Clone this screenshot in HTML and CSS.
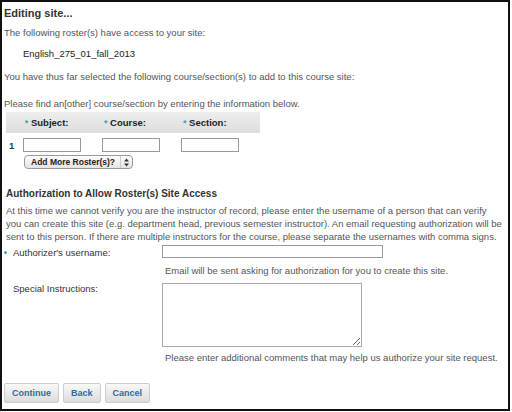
FILE: index.html
```html
<!DOCTYPE html>
<html>
<head>
<meta charset="utf-8">
<link rel="stylesheet" href="styles.css">
</head>
<body>
<div class="frame">
  <h1 class="title">Editing site...</h1>
  <p class="txt">The following roster(s) have access to your site:</p>
  <p class="roster">English_275_01_fall_2013</p>
  <p class="txt sel">You have thus far selected the following course/section(s) to add to this course site:</p>
  <p class="txt find">Please find an[other] course/section by entering the information below.</p>
  <div class="table">
    <div class="thead">
      <span class="num"></span>
      <span class="th"><span class="star">*</span> Subject:</span>
      <span class="th"><span class="star">*</span> Course:</span>
      <span class="th"><span class="star">*</span> Section:</span>
    </div>
    <div class="trow">
      <span class="num">1</span>
      <span class="td"><input class="inp" type="text"></span>
      <span class="td"><input class="inp" type="text"></span>
      <span class="td"><input class="inp" type="text"></span>
    </div>
    <div class="addrow">
      <span class="selbtn">Add More Roster(s)? <span class="arrows"><svg width="7" height="9" viewBox="0 0 7 9"><path d="M3.5 0.5 L6 3.5 H1 Z M3.5 8.5 L6 5.5 H1 Z" fill="#333"/></svg></span></span>
    </div>
  </div>
  <h2 class="sub">Authorization to Allow Roster(s) Site Access</h2>
  <p class="para">At this time we cannot verify you are the instructor of record, please enter the username of a person that can verify<br>you can create this site (e.g. department head, previous semester instructor). An email requesting authorization will be<br>sent to this person. If there are multiple instructors for the course, please separate the usernames with comma signs.</p>
  <div class="form">
    <label class="lbl req"><span class="dot"></span>Authorizer's username:</label>
    <div class="val">
      <input class="wide" type="text">
      <p class="note">Email will be sent asking for authorization for you to create this site.</p>
    </div>
    <label class="lbl spec">Special Instructions:</label>
    <div class="val val2">
      <textarea class="area"></textarea>
      <p class="note note2">Please enter additional comments that may help us authorize your site request.</p>
    </div>
  </div>
  <div class="actions">
    <button class="btn">Continue</button>
    <button class="btn">Back</button>
    <button class="btn">Cancel</button>
  </div>
</div>
</body>
</html>
```
FILE: styles.css
```css
* { box-sizing: border-box; }
html, body { margin: 0; padding: 0; background: #fff; }
body { font-family: "Liberation Sans", Arial, sans-serif; font-size: 9.5px; color: #555; }
.frame {
  width: 510px; height: 411px;
  border: 2px solid #111;
  padding: 5px 0 0 2px;
}
p { margin: 0; }
.title { margin: 0; font-size: 11px; font-weight: bold; color: #333; line-height: 13px; }
.txt { line-height: 13px; margin-top: 6px; }
.roster { color: #222; margin: 8px 0 0 19px; line-height: 13px; }
.sel { margin-top: 10px; }
.find { margin-top: 14px; }
.table { width: 254px; margin: 2px 0 0 2px; }
.thead {
  display: flex; align-items: center; height: 21px;
  background: linear-gradient(#ededed, #dedede);
}
.th { width: 80px; padding-left: 2px; font-weight: bold; color: #222; font-size: 9.5px; }
.star { color: #3aa0c8; font-size: 9px; }
.num { width: 17px; padding-left: 3px; color: #333; font-weight: bold; }
.trow { display: flex; align-items: center; height: 18px; margin-top: 3px; }
.td { width: 80px; }
.inp { width: 58px; height: 14px; border: 1px solid #999; padding: 0; margin: 0; display: block; }
.addrow { display: flex; padding-left: 18px; margin-top: 1px; }
.selbtn {
  display: inline-flex; align-items: center; gap: 5px;
  height: 14px; padding: 0 2px 0 6px;
  border: 1px solid #999; border-radius: 4px;
  background: linear-gradient(#fdfdfd, #e4e4e4);
  font-size: 8.5px; font-weight: bold; color: #222;
}
.arrows { display: inline-flex; align-items: center; border-left: 1px solid #ccc; padding-left: 2px; height: 12px; }
.sub { margin: 18px 0 0 2px; font-size: 10px; font-weight: bold; color: #333; line-height: 13px; }
.para { margin: 4px 0 0 2px; line-height: 13px; width: 506px; white-space: nowrap; }
.form { display: grid; grid-template-columns: 158px auto; margin-top: 2px; }
.lbl { padding-left: 9px; position: relative; color: #333; line-height: 13px; }
.req { padding-top: 1px; }
.dot { position: absolute; left: 0; top: 6px; width: 3px; height: 3px; border-radius: 50%; background: #3aa0c8; }
.wide { width: 221px; height: 13px; border: 1px solid #999; padding: 0; margin: 0; display: block; }
.note { margin: 6px 0 0 3px; line-height: 13px; }
.spec { padding-top: 5px; }
.val2 { padding-top: 6px; }
.area { width: 200px; height: 64px; border: 1px solid #aaa; padding: 0; margin: 0; display: block; resize: both; }
.note2 { margin-top: 4px; }
.actions { display: flex; gap: 4px; margin: 19px 0 0 0; }
.btn {
  height: 20px; padding: 0 7px;
  border: 1px solid #ccc; border-radius: 2px;
  background: linear-gradient(#f8f8f8, #dcdcdc);
  font-family: "Liberation Sans", Arial, sans-serif;
  font-size: 9px; font-weight: bold; color: #2f6a9a;
}
```
